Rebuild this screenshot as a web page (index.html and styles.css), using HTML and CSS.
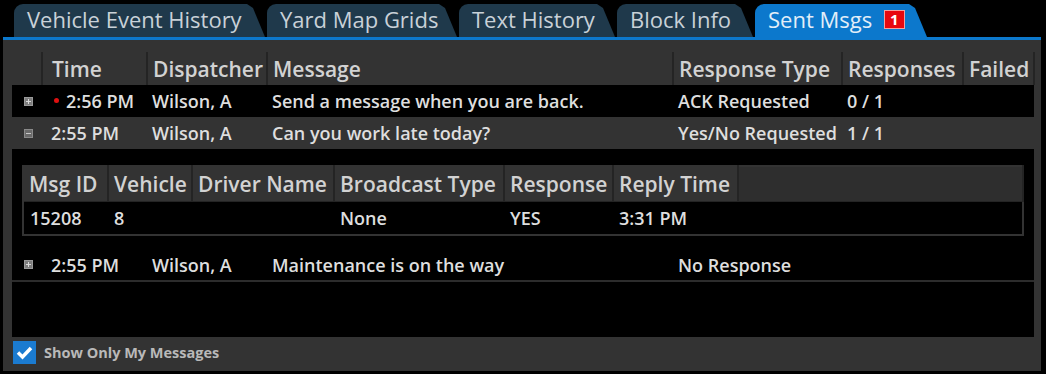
FILE: index.html
```html
<!DOCTYPE html>
<html>
<head>
<meta charset="utf-8">
<title>Sent Msgs</title>
<link rel="stylesheet" href="styles.css">
</head>
<body>
	<section class="window">
		<div class="tabs">
			<div class="tab t1">Vehicle Event History</div>
			<div class="tab t2">Yard Map Grids</div>
			<div class="tab t3">Text History</div>
			<div class="tab t4">Block Info</div>
			<div class="tab t5 active">Sent Msgs <span class="badge">1</span></div>
		</div>

		<div class="panel">
			<table class="grid">
				<colgroup>
					<col style="width:30px"><col style="width:105px"><col style="width:120px"><col style="width:406px">
					<col style="width:169px"><col style="width:121px"><col>
				</colgroup>
				<thead>
					<tr><th></th><th class="tcol">Time</th><th>Dispatcher</th><th>Message</th><th>Response Type</th><th>Responses</th><th>Failed</th></tr>
				</thead>
				<tbody>
					<tr class="row">
						<td class="exp"><svg width="9" height="9" viewBox="0 0 9 9"><rect x="0.5" y="0.5" width="8" height="8" fill="#7d7d7d" stroke="#9a9a9a"/><path d="M2 4.5h5M4.5 2v5" stroke="#d8d8d8"/></svg></td>
						<td class="time"><span class="dot"></span>2:56 PM</td><td>Wilson, A</td><td>Send a message when you are back.</td><td>ACK Requested</td><td>0 / 1</td><td></td>
					</tr>
					<tr class="row open">
						<td class="exp"><svg width="9" height="9" viewBox="0 0 9 9"><rect x="0.5" y="0.5" width="8" height="8" fill="#6a6a6a" stroke="#8a8a8a"/><path d="M2 4.5h5" stroke="#c8c8c8"/></svg></td>
						<td class="tcol">2:55 PM</td><td>Wilson, A</td><td>Can you work late today?</td><td>Yes/No Requested</td><td>1 / 1</td><td></td>
					</tr>
					<tr class="detail">
						<td colspan="7">
							<table class="sub">
								<colgroup>
									<col style="width:85px"><col style="width:84px"><col style="width:142px"><col style="width:170px">
									<col style="width:109px"><col style="width:125px"><col>
								</colgroup>
								<thead>
									<tr><th>Msg ID</th><th>Vehicle</th><th>Driver Name</th><th>Broadcast Type</th><th>Response</th><th>Reply Time</th><th class="rest"></th></tr>
								</thead>
								<tbody>
									<tr><td>15208</td><td>8</td><td></td><td>None</td><td>YES</td><td>3:31 PM</td><td></td></tr>
								</tbody>
							</table>
						</td>
					</tr>
					<tr class="row last">
						<td class="exp"><svg width="9" height="9" viewBox="0 0 9 9"><rect x="0.5" y="0.5" width="8" height="8" fill="#7d7d7d" stroke="#9a9a9a"/><path d="M2 4.5h5M4.5 2v5" stroke="#d8d8d8"/></svg></td>
						<td class="tcol">2:55 PM</td><td>Wilson, A</td><td>Maintenance is on the way</td><td>No Response</td><td></td><td></td>
					</tr>
					<tr class="filler"><td colspan="7"></td></tr>
				</tbody>
			</table>

			<label class="mine">
				<span class="check"><svg width="23" height="23" viewBox="0 0 23 23"><path d="M5 11.5l4.5 4.5L18 7" fill="none" stroke="#fff" stroke-width="3.5"/></svg></span>
				Show Only My Messages
			</label>
		</div>
	</section>
</body>
</html>
```

FILE: styles.css
```css
body{ margin: 0; background: #000; font-family: "Open Sans", "Noto Sans", sans-serif; color: #dedede;}

.window{ width: 1038px; margin: 0 0 0 3px; padding-top: 4px;}

.tabs{ display: flex; gap: 2px; padding-left: 11px; height: 33px; border-bottom: 3px solid #0c78cc;}
.tab{ height: 33px; line-height: 31px; padding-left: 13px; font-size: 22px; color: #c9d1d8; background: #1f394b; border-top-left-radius: 9px; clip-path: polygon(0 0, calc(100% - 18px) 0, calc(100% - 12px) 4px, 100% 100%, 0 100%); box-sizing: border-box; white-space: nowrap;}
.t1{ width: 251px;}
.t2{ width: 190px;}
.t3{ width: 156px;}
.t4{ width: 136px;}
.t5{ width: 172px;}
.tab.active{ background: #0c78cc; color: #e3eef8;}
.badge{ display: inline-block; width: 19px; height: 17px; margin-left: 6px; line-height: 17px; text-align: center; font-size: 15px; font-weight: 700; color: #fff; background: #e8070e; border: 1px solid #f3a0a0; vertical-align: 3px;}

.panel{ background: #333; padding: 12px 6px 0 9px; height: 331px; box-sizing: border-box;}

.grid{ width: 1023px; border-collapse: collapse; table-layout: fixed; font-weight: 600; font-size: 18px;}
.grid th{ height: 33px; padding: 0 0 0 5px; text-align: left; font-size: 21px; font-weight: 600; color: #d2d2d2; border-left: 2px solid #242424; white-space: nowrap; overflow: hidden;}
.grid th:first-child{ border-left: 0;}
.grid th:last-child{ border-right: 2px solid #242424;}
.grid td{ padding: 0 0 0 5px; white-space: nowrap; overflow: hidden;}
.grid .tcol{ padding-left: 9px;}

.row td{ height: 32px; background: #000;}
.row.open td{ background: #333;}
.row.last td{ height: 31px; border-bottom: 2px solid #2c2c2c;}
.row .exp{ padding: 0 0 0 12px; line-height: 0;}
.row .time{ padding-left: 0;}
.dot{ display: inline-block; width: 5px; height: 5px; border-radius: 50%; background: #e01010; margin: 0 7px 0 12px; vertical-align: 5px;}

.detail td{ background: #000; padding: 16px 10px 13px;}
.filler td{ height: 55px; background: #000;}

.sub{ width: 100%; border-collapse: collapse; table-layout: fixed; border: 2px solid #333;}
.sub th{ height: 34px; padding: 0 0 0 5px; text-align: left; font-size: 21px; font-weight: 600; color: #d2d2d2; background: #333; border-left: 2px solid #242424; border-bottom: 1px solid #242424;}
.sub th:first-child{ border-left: 0;}
.sub th.rest{ background: #2e2e2e;}
.sub td{ height: 32px; padding: 0 0 0 6px; background: #000;}

.mine{ display: flex; align-items: center; gap: 8px; height: 30px; padding-left: 1px; font-size: 14.5px; font-weight: 700; color: #b9b9b9;}
.check{ width: 23px; height: 23px; background: #1b7bd0; line-height: 0;}
```
